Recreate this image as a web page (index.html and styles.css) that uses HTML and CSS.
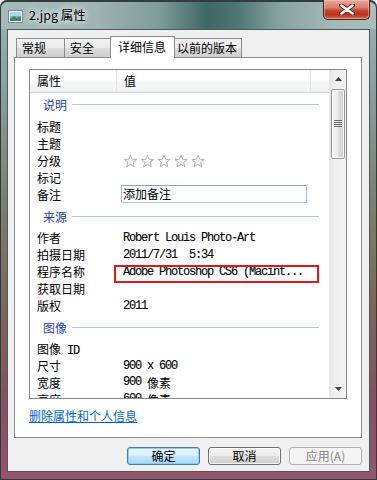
FILE: index.html
```html
<!DOCTYPE html>
<html>
<head>
<meta charset="utf-8">
<link rel="stylesheet" href="styles.css">
</head>
<body>
<div class="win">
  <div class="titlebar">
    <svg class="ticon" width="15" height="13" viewBox="0 0 15 13">
      <rect x="0.5" y="0.5" width="14" height="12" fill="#f4f4f4" stroke="#7a8a96"/>
      <rect x="2" y="2" width="11" height="9" fill="#6fb4e6"/>
      <rect x="2" y="2" width="11" height="4" fill="#a9d6f5"/>
      <path d="M2 9 L6 6 L9 8 L13 6 L13 11 L2 11 Z" fill="#3e8a5a"/>
    </svg>
    <span class="ttext">2.jpg 属性</span>
    <div class="close">
      <svg width="16" height="11" viewBox="0 0 16 11">
        <path d="M2 1 L8 5.5 L14 1 M2 10 L8 5.5 L14 10" stroke="#5a2a20" stroke-width="4.4" fill="none" stroke-linecap="round"/>
        <path d="M2.5 1.5 L8 5.5 L13.5 1.5 M2.5 9.5 L8 5.5 L13.5 9.5" stroke="#ffffff" stroke-width="2.6" fill="none" stroke-linecap="round"/>
      </svg>
    </div>
  </div>
  <div class="client">
    <div class="tabs">
      <div class="tab t1">常规</div>
      <div class="tab t2">安全</div>
      <div class="tab sel t3">详细信息</div>
      <div class="tab t4">以前的版本</div>
    </div>
    <div class="panel">
      <div class="list">
        <div class="lcontent">
          <div class="lhead">
            <div class="hc c1">属性</div>
            <div class="hc c2">值</div>
            <div class="hc c3"></div>
          </div>
          <div class="grp first"><span>说明</span><i></i></div>
          <div class="row"><span class="k">标题</span><span class="v"></span></div>
          <div class="row"><span class="k">主题</span><span class="v"></span></div>
          <div class="row"><span class="k">分级</span><span class="v">
            <svg class="stars" width="86" height="15" viewBox="0 0 86 15">
              <defs>
                <linearGradient id="sg" x1="0" y1="0" x2="0" y2="1">
                  <stop offset="0" stop-color="#ffffff"/>
                  <stop offset="1" stop-color="#eeeeee"/>
                </linearGradient>
                <polygon id="st" points="7,0.8 8.65,4.8 13.1,5 9.66,7.87 10.8,12.3 7,9.8 3.2,12.3 4.34,7.87 0.9,5 5.35,4.8" fill="url(#sg)" stroke="#b0b0b0" stroke-width="1" stroke-linejoin="round"/>
              </defs>
              <use href="#st" x="0.5" y="0.5"/>
              <use href="#st" x="17.5" y="0.5"/>
              <use href="#st" x="34" y="0.5"/>
              <use href="#st" x="51" y="0.5"/>
              <use href="#st" x="68" y="0.5"/>
            </svg>
          </span></div>
          <div class="row"><span class="k">标记</span><span class="v"></span></div>
          <div class="row"><span class="k">备注</span><span class="v"><span class="edit">添加备注</span></span></div>
          <div class="grp"><span>来源</span><i></i></div>
          <div class="row"><span class="k">作者</span><span class="v m">Robert Louis Photo-Art</span></div>
          <div class="row"><span class="k">拍摄日期</span><span class="v m">2011/7/31  5:34</span></div>
          <div class="row mark"><span class="k">程序名称</span><span class="v m">Adobe Photoshop CS6 (Macint...</span><span class="redbox"></span></div>
          <div class="row"><span class="k">获取日期</span><span class="v"></span></div>
          <div class="row"><span class="k">版权</span><span class="v m">2011</span></div>
          <div class="grp"><span>图像</span><i></i></div>
          <div class="row"><span class="k">图像<span class="m"> ID</span></span><span class="v"></span></div>
          <div class="row"><span class="k">尺寸</span><span class="v m">900 x 600</span></div>
          <div class="row"><span class="k">宽度</span><span class="v"><span class="m">900 </span>像素</span></div>
          <div class="row"><span class="k">高度</span><span class="v"><span class="m">600 </span>像素</span></div>
        </div>
        <div class="sb">
          <div class="sbtn"><svg width="7" height="4" viewBox="0 0 7 4"><path d="M0 4 L3.5 0 L7 4 Z" fill="#404040"/></svg></div>
          <div class="thumb">
            <svg width="8" height="8" viewBox="0 0 8 8"><path d="M0 0.5 H8 M0 2.5 H8 M0 4.5 H8 M0 6.5 H8" stroke="#6d6d6d" stroke-width="1"/></svg>
          </div>
          <div class="track"></div>
          <div class="sbtn"><svg width="7" height="4" viewBox="0 0 7 4"><path d="M0 0 L3.5 4 L7 0 Z" fill="#404040"/></svg></div>
        </div>
      </div>
      <a class="link" href="#">删除属性和个人信息</a>
    </div>
    <div class="btns">
      <div class="btn def">确定</div>
      <div class="btn">取消</div>
      <div class="btn dis">应用(A)</div>
    </div>
  </div>
</div>
</body>
</html>
```

FILE: styles.css
```css
html, body {
  margin: 0;
  padding: 0;
  background: #ffffff;
}

.win {
  width: 377px;
  height: 480px;
  box-sizing: border-box;
  display: flex;
  flex-direction: column;
  border-radius: 7px 7px 0 0;
  background: linear-gradient(180deg, #9db3b2 0px, #8aa2a0 80px, #7c7f6c 200px, #7d6858 300px, #855060 400px, #94566a 480px);
  box-shadow: inset 0 0 0 1px #2f3d42;
  overflow: hidden;
  font-family: "Noto Sans CJK SC", "Noto Sans", sans-serif;
  font-size: 12px;
  color: #000;
}

.titlebar {
  height: 29px;
  display: flex;
  align-items: flex-start;
  border-radius: 7px 7px 0 0;
  background: linear-gradient(90deg, #a6bab9 0%, #9fb4b3 25%, #7f9c9a 42%, #3f6764 55%, #4f7673 63%, #86a3a1 74%, #a3b8b7 88%, #a9bdbc 100%);
  box-shadow: inset 0 1px 0 1px #2f3d42;
}

.ticon {
  margin: 10px 0 0 8px;
  flex: none;
}

.ttext {
  margin: 7px 0 0 6px;
  font-size: 12.5px;
  line-height: 16px;
  color: #000;
  text-shadow: 0 0 6px #fff, 0 0 10px rgba(255, 255, 255, 0.9);
}

.close {
  margin-left: auto;
  margin-right: 7px;
  width: 47px;
  height: 20px;
  box-sizing: border-box;
  border: 1px solid #4a2520;
  border-top: none;
  border-radius: 0 0 5px 5px;
  background: linear-gradient(180deg, #e8a898 0%, #d97d68 40%, #c44a30 55%, #b8321c 75%, #d6694c 100%);
  box-shadow: inset 0 0 0 1px rgba(255, 200, 190, 0.5);
  display: flex;
  align-items: center;
  justify-content: center;
}

.client {
  flex: 1;
  margin: 0 7px 8px 7px;
  border: 1px solid #4b5a62;
  background: #f0f0f0;
  display: flex;
  flex-direction: column;
}

.tabs {
  display: flex;
  align-items: flex-end;
  height: 21px;
  padding: 6px 0 0 8px;
}

.tab {
  box-sizing: border-box;
  height: 19px;
  border: 1px solid #898c95;
  border-bottom: none;
  margin-right: -1px;
  background: linear-gradient(180deg, #f2f2f2 0%, #ebebeb 50%, #dddddd 50%, #cfcfcf 100%);
  line-height: 17px;
  padding-left: 5px;
  white-space: nowrap;
}

.t1 { width: 49px; }
.t2 { width: 47px; }
.t4 { width: 68px; padding-left: 2px; }

.tab.sel {
  position: relative;
  z-index: 1;
  height: 22px;
  width: 65px;
  margin-bottom: -1px;
  background: #ffffff;
  line-height: 19px;
  padding-left: 7px;
}

.panel {
  position: relative;
  margin-left: 6px;
  width: 348px;
  height: 381px;
  box-sizing: border-box;
  border: 1px solid #898c95;
  background: #ffffff;
  padding: 11px 0 0 14px;
}

.list {
  width: 318px;
  height: 330px;
  box-sizing: border-box;
  border: 1px solid #828790;
  display: flex;
  overflow: hidden;
}

.lcontent {
  flex: 1;
  overflow: hidden;
}

.lhead {
  display: flex;
  height: 23px;
  box-sizing: border-box;
  border-bottom: 1px solid #d5d5d5;
  background: linear-gradient(180deg, #ffffff 0%, #ffffff 45%, #f6f7f8 55%, #f1f2f4 100%);
}

.hc {
  box-sizing: border-box;
  line-height: 22px;
  padding-left: 7px;
  border-right: 1px solid #e3e4e6;
}

.c1 { width: 87px; }
.c2 { width: 194px; }
.c3 { flex: 1; border-right: none; }

.grp {
  height: 26px;
  box-sizing: border-box;
  padding: 5px 10px 0 13px;
  display: flex;
  align-items: flex-start;
  color: #1f3fae;
  line-height: 17px;
}

.grp.first {
  height: 25px;
  padding-top: 3px;
}

.grp i {
  flex: 1;
  height: 1px;
  margin: 8px 0 0 5px;
  background: #b6c5dc;
}

.row {
  position: relative;
  display: flex;
  height: 17px;
  line-height: 17px;
  padding-left: 7px;
  white-space: pre;
}

.k {
  width: 86px;
  flex: none;
}

.v {
  flex: 1;
  display: flex;
  align-items: center;
}

.m {
  font-family: "Liberation Mono", monospace;
  font-size: 12px;
  letter-spacing: -1.2px;
  color: #000;
  -webkit-text-stroke: 0.1px #000;
}

.v.m {
  padding-top: 1px;
}

.stars {
  display: block;
  margin: 1px 0 0 0;
}

.edit {
  display: block;
  box-sizing: border-box;
  width: 186px;
  height: 18px;
  margin: -1px 0 0 -2px;
  padding-left: 1px;
  border: 1px solid #a6c6e6;
  border-top-color: #7ea8d2;
  line-height: 16px;
  font-family: "Noto Sans CJK SC", sans-serif;
  letter-spacing: 0;
}

.redbox {
  position: absolute;
  left: 84px;
  top: 2px;
  width: 205px;
  height: 18px;
  box-sizing: border-box;
  border: 2px solid #e8141c;
}

.sb {
  width: 17px;
  flex: none;
  display: flex;
  flex-direction: column;
  align-items: center;
  background: linear-gradient(90deg, #e6e6e6 0%, #f0f0f0 30%, #f2f2f2 100%);
  border-left: 1px solid #e8e8e8;
  box-sizing: border-box;
}

.sbtn {
  height: 18px;
  width: 100%;
  display: flex;
  align-items: center;
  justify-content: center;
  flex: none;
}

.thumb {
  margin-top: 1px;
  width: 14px;
  height: 70px;
  box-sizing: border-box;
  border: 1px solid #989898;
  border-radius: 2px;
  background: linear-gradient(90deg, #f6f6f6 0%, #ececec 45%, #dedede 55%, #d2d2d2 100%);
  box-shadow: inset 0 0 0 1px rgba(255, 255, 255, 0.8);
  display: flex;
  align-items: center;
  justify-content: center;
  flex: none;
}

.thumb svg {
  display: block;
}

.track {
  flex: 1;
}

.link {
  display: block;
  margin-top: 8px;
  width: max-content;
  line-height: 17px;
  color: #0066cc;
  text-decoration: underline;
}

.btns {
  display: flex;
  justify-content: flex-end;
  gap: 8px;
  padding: 9px 7px 0 0;
}

.btn {
  width: 73px;
  height: 18px;
  box-sizing: border-box;
  border: 1px solid #707070;
  border-radius: 3px;
  background: linear-gradient(180deg, #f2f2f2 0%, #ebebeb 50%, #dddddd 50%, #cfcfcf 100%);
  box-shadow: inset 0 0 0 1px rgba(255, 255, 255, 0.7);
  text-align: center;
  line-height: 16px;
}

.btn.def {
  border-color: #3c7fb1;
  background: linear-gradient(180deg, #eaf6fd 0%, #d9f0fc 50%, #bee6fd 50%, #a7d9f5 100%);
  box-shadow: inset 0 0 0 1px #8ecbef;
}

.btn.dis {
  border-color: #adb2b5;
  background: #f4f4f4;
  box-shadow: none;
  color: #838383;
}
```
